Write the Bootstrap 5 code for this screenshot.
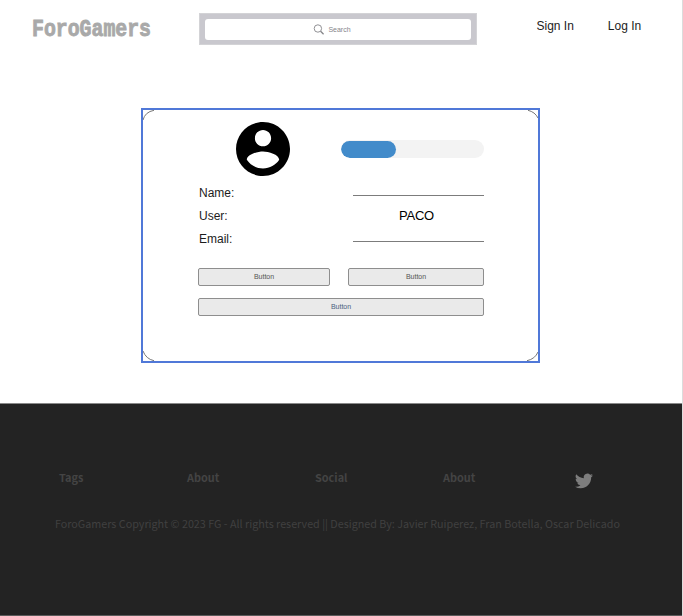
<!DOCTYPE html>
<html lang="en">
<head>
<meta charset="utf-8">
<title>ForoGamers</title>
<meta name="viewport" content="width=device-width, initial-scale=1">
<link href="https://cdn.jsdelivr.net/npm/bootstrap@5.3.0/dist/css/bootstrap.min.css" rel="stylesheet">
<style>
html, body { height: 616px; overflow: hidden; }
body { font: 12px/16px "Liberation Sans", Arial, sans-serif; color: #1c1c1c; background: #fff; }
.page { height: 616px; border-right: 1px solid #dcdcdc; }
.site-head { height: 108px; padding: 13px 0 0 32px; }
.logo { width: 122px; height: 30px; margin-right: 45px; overflow: visible; }
.search-wrap { width: 278px; height: 32px; background: #c9c8ce; border: 1px solid #d3d3d6; padding: 5px; }
.search-box { height: 21px; background: #fff; border-radius: 3px; font-size: 7px; color: #85858b; gap: 4px; padding-right: 12px; }
.links { margin: 5px 0 0 59.500px; gap: 34px; }
.links a { color: #1c1c1c; }
.frame { width: 399px; height: 255px; margin-left: 141px; border: 2px solid #5078d8; }
.profile { height: 251px; position: relative; padding: 12px 54px 0 56px; }
.corners { position: absolute; left: 0; top: 0; }
.avatar { width: 54px; height: 54px; margin-left: 37px; }
.meter { width: 143px; height: 18px; border-radius: 9px; background: #f3f3f3; margin: 18px 0 0 51px; }
.meter .progress-bar { height: 17px; margin-top: 1px; border-radius: 9px; background: #428bca; }
.fields { margin-top: 6px; }
.field { height: 23px; line-height: 23px; }
.field .value { width: 131px; }
.field .blank { height: 14px; border-bottom: 1px solid #7c7c7c; }
.paco { font-size: 13px; line-height: 22px; letter-spacing: -.2px; color: #000; padding-right: 4px; }
.actions { margin-top: 17px; margin-left: -1px; gap: 12px 18px; }
.btn-wire { height: 18px; padding: 0; font-size: 7px; line-height: 14px; color: #555; background: #eaeaea; border: 1px solid #8e8e8e; border-radius: 2px; }
.b1 { width: 132px; } .b2 { width: 136px; } .b3 { width: 286px; color: #4a5f80; }
.foot { height: 213px; margin-top: 40px; background: #232323; border-top: 1px solid #898989; border-bottom: 1px solid #5b5b5b; font-family: "Noto Sans CJK SC", sans-serif; color: #444; padding-top: 64px; }
.foot-nav { padding-left: 59px; font-size: 10.900px; font-weight: 700; line-height: 18px; }
.foot-nav > * { width: 128px; }
.foot-nav .bird { width: 20px; height: 18px; margin: 4px 0 0 3px; }
.copy { margin: 25px 0 0 55px; font-size: 10.760px; line-height: 18px; white-space: nowrap; color: #404040; }
</style>
<script src="https://cdn.jsdelivr.net/npm/bootstrap@5.3.0/dist/js/bootstrap.bundle.min.js"></script>
</head>
<body>
<div class="page">
  <header class="site-head d-flex align-items-start">
    <svg class="logo flex-shrink-0" viewBox="0 0 122 30"><text x="0" y="22.500" font-family="Liberation Mono, monospace" font-weight="700" font-size="24" textLength="119" lengthAdjust="spacingAndGlyphs" fill="#a9a9a9" stroke="#a9a9a9" stroke-width=".9">ForoGamers</text></svg>
    <div class="search-wrap flex-shrink-0">
      <div class="search-box d-flex align-items-center justify-content-center">
        <svg width="11" height="11" viewBox="0 0 11 11" fill="none" stroke="#858589"><circle cx="4.900" cy="4.500" r="3.700" stroke-width=".9"/><path d="M7.600 7.200l3 3" stroke-width="1.300"/></svg>
        <span>Search</span>
      </div>
    </div>
    <nav class="links d-flex text-nowrap"><a class="text-decoration-none" href="#">Sign In</a><a class="text-decoration-none" href="#">Log In</a></nav>
  </header>
  <main>
    <div class="frame">
      <section class="profile">
        <svg class="corners" width="395" height="251" viewBox="0 0 395 251" fill="none" stroke="#777"><path d="M0 10Q2 2 11 .3M385 .3Q392 2 395 8M0 241Q3 249 11 250.700M384 250.700Q392 249 395 242"/></svg>
        <div class="d-flex">
          <svg class="avatar flex-shrink-0" viewBox="2 2 20 20"><path d="M12 2C6.480 2 2 6.480 2 12s4.480 10 10 10 10-4.480 10-10S17.520 2 12 2zm0 3c1.660 0 3 1.340 3 3s-1.340 3-3 3-3-1.340-3-3 1.340-3 3-3zm0 14.200c-2.500 0-4.710-1.280-6-3.220.030-1.990 4-3.080 6-3.080 1.990 0 5.970 1.090 6 3.080-1.290 1.940-3.500 3.220-6 3.220z"/></svg>
          <div class="meter progress flex-shrink-0"><div class="progress-bar" style="width:38.5%"></div></div>
        </div>
        <div class="fields">
          <div class="field d-flex justify-content-between"><span>Name:</span><div class="value blank"></div></div>
          <div class="field d-flex justify-content-between"><span>User:</span><div class="value paco text-center">PACO</div></div>
          <div class="field d-flex justify-content-between"><span>Email:</span><div class="value blank"></div></div>
        </div>
        <div class="actions d-flex flex-wrap">
          <button class="btn btn-wire b1">Button</button>
          <button class="btn btn-wire b2">Button</button>
          <button class="btn btn-wire b3">Button</button>
        </div>
      </section>
    </div>
  </main>
  <footer class="foot">
    <div class="foot-nav d-flex">
      <span>Tags</span><span>About</span><span>Social</span><span>About</span>
      <svg class="bird" viewBox="0 0 24 24" fill="#7d7d7d"><path d="M23.950 4.570a10 10 0 0 1-2.820.770 4.960 4.960 0 0 0 2.160-2.720c-.950.550-2 .960-3.130 1.180a4.920 4.920 0 0 0-8.380 4.480C7.690 8.090 4.070 6.130 1.640 3.160a4.920 4.920 0 0 0 1.520 6.570 4.900 4.900 0 0 1-2.230-.610v.060a4.920 4.920 0 0 0 3.950 4.830 5 5 0 0 1-2.210.080 4.940 4.940 0 0 0 4.600 3.420A9.870 9.870 0 0 1 0 19.540a13.990 13.990 0 0 0 7.560 2.210c9.050 0 14-7.500 14-13.980l-.020-.640a9.940 9.940 0 0 0 2.410-2.560z"/></svg>
    </div>
    <p class="copy">ForoGamers Copyright © 2023 FG - All rights reserved || Designed By: Javier Ruiperez, Fran Botella, Oscar Delicado</p>
  </footer>
</div>
</body>
</html>
